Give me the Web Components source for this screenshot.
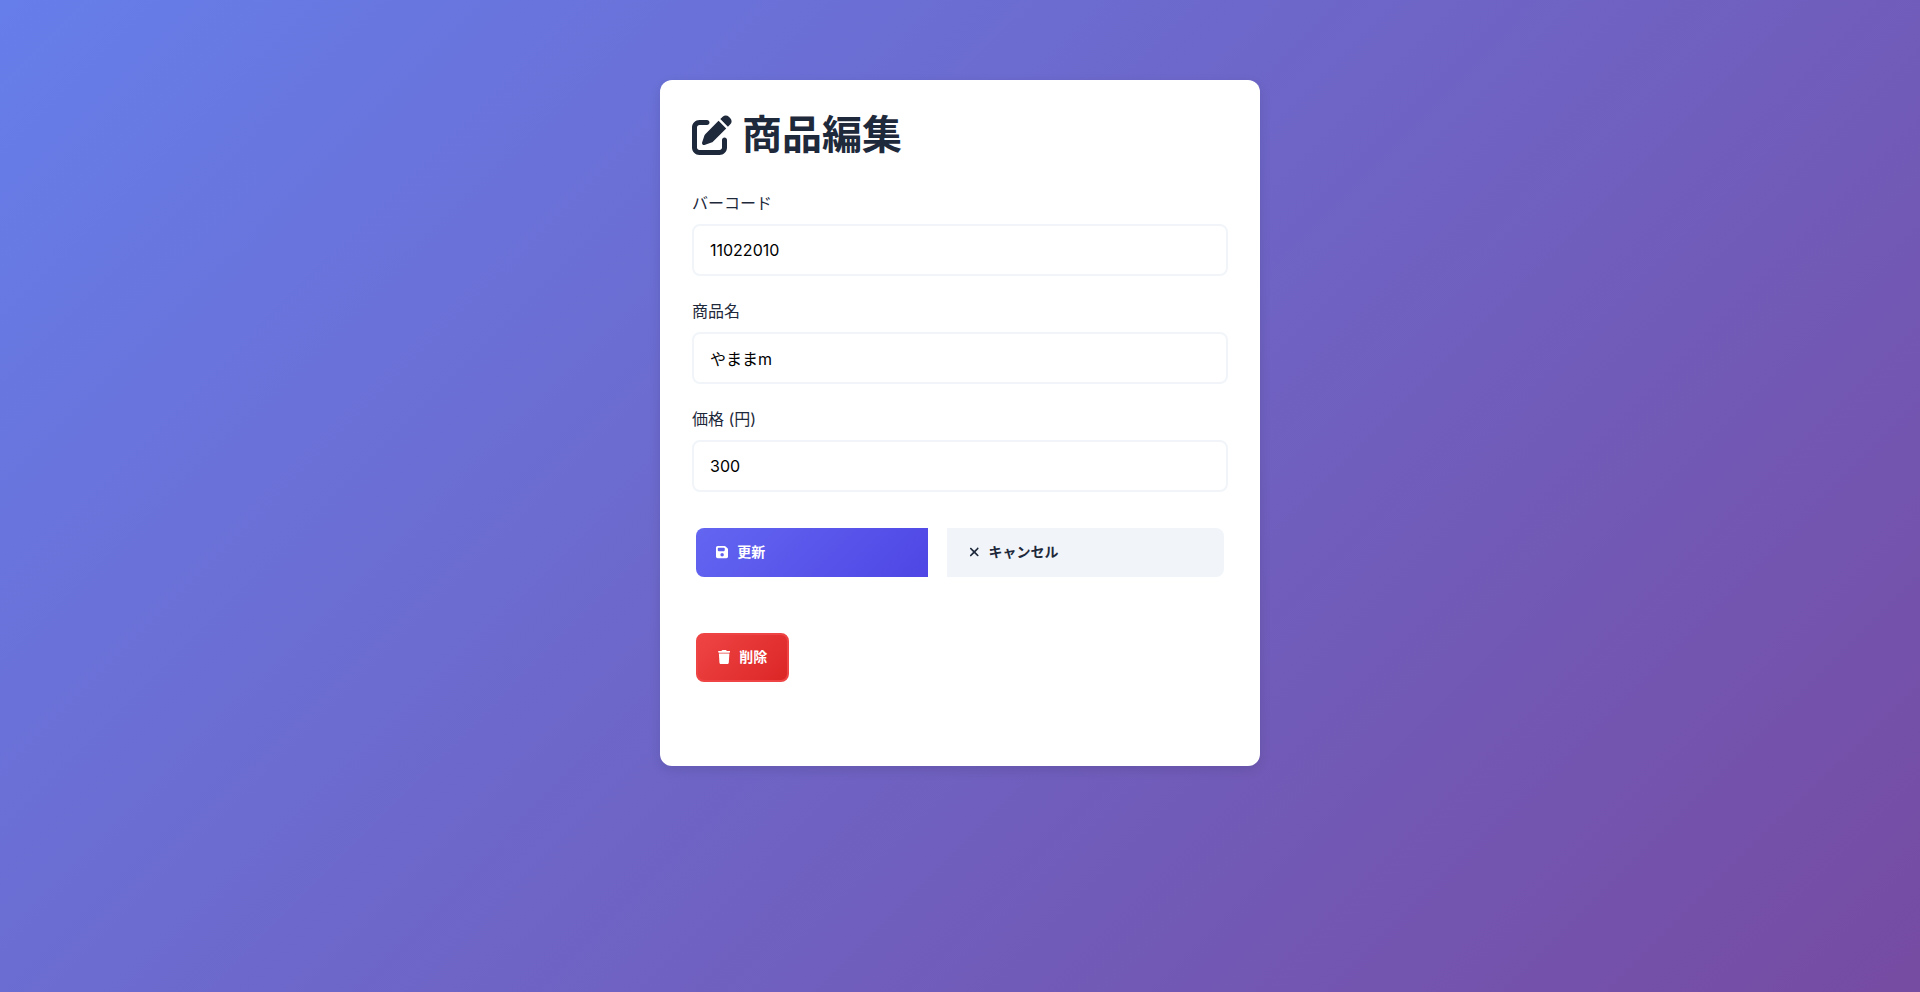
<!DOCTYPE html>
<html lang="ja">
<head>
<meta charset="utf-8">
<meta name="viewport" content="width=device-width, initial-scale=1">
<title>商品編集</title>
<style>
body { margin: 0; min-height: 100vh; background: linear-gradient(135deg, #667eea 0%, #764ba2 100%) no-repeat; font-family: Inter, "Noto Sans CJK JP", sans-serif; font-size: 16px; line-height: 24px; color: #1e293b; }
</style>
</head>
<body>
<product-card>
  <page-title slot="title">商品編集</page-title>
  <text-field label="バーコード" value="11022010"></text-field>
  <text-field label="商品名" value="やままm"></text-field>
  <text-field label="価格 (円)" value="300" mode="numeric"></text-field>
  <button-row slot="actions">
    <action-button kind="primary" icon="save">更新</action-button>
    <action-button kind="secondary" icon="close">キャンセル</action-button>
  </button-row>
  <action-button slot="danger" kind="danger" icon="trash">削除</action-button>
</product-card>
<script>
const icons = {
  edit: '<svg viewBox="0 0 512 512"><path d="M471.6 21.7c-21.9-21.9-57.3-21.9-79.2 0L362.3 51.7l97.9 97.9 30.1-30.1c21.9-21.9 21.9-57.3 0-79.2L471.6 21.7zm-299.2 220c-6.1 6.1-10.8 13.6-13.5 21.9l-29.6 88.8c-2.9 8.6-.6 18.1 5.8 24.6s15.9 8.7 24.6 5.8l88.8-29.6c8.2-2.7 15.7-7.4 21.9-13.5L437.7 172.3 339.7 74.3 172.4 241.7zM96 64C43 64 0 107 0 160V416c0 53 43 96 96 96H352c53 0 96-43 96-96V320c0-17.7-14.3-32-32-32s-32 14.3-32 32v96c0 17.7-14.3 32-32 32H96c-17.7 0-32-14.3-32-32V160c0-17.7 14.3-32 32-32h96c17.7 0 32-14.3 32-32s-14.3-32-32-32H96z"/></svg>',
  save: '<svg viewBox="0 0 448 512"><path d="M64 32C28.700 32 0 60.700 0 96V416c0 35.300 28.700 64 64 64H384c35.300 0 64-28.700 64-64V173.300c0-17-6.700-33.300-18.700-45.300L352 50.700C340 38.700 323.700 32 306.700 32H64zm0 96c0-17.700 14.300-32 32-32H288c17.700 0 32 14.300 32 32v64c0 17.700-14.300 32-32 32H96c-17.700 0-32-14.300-32-32V128zM224 288a64 64 0 1 1 0 128 64 64 0 1 1 0-128z"/></svg>',
  close: '<svg viewBox="0 0 384 512"><path d="M342.6 150.600c12.500-12.500 12.500-32.800 0-45.300s-32.800-12.500-45.300 0L192 210.700 86.600 105.400c-12.500-12.500-32.800-12.500-45.300 0s-12.500 32.800 0 45.300L146.700 256 41.400 361.400c-12.500 12.500-12.500 32.800 0 45.300s32.800 12.500 45.300 0L192 301.300 297.400 406.600c12.500 12.500 32.800 12.500 45.300 0s12.500-32.800 0-45.300L237.300 256 342.600 150.600z"/></svg>',
  trash: '<svg viewBox="0 0 448 512"><path d="M135.200 17.700L128 32H32C14.300 32 0 46.300 0 64S14.300 96 32 96H416c17.700 0 32-14.300 32-32s-14.300-32-32-32H320l-7.200-14.300C307.400 6.800 296.300 0 284.200 0H163.800c-12.100 0-23.200 6.800-28.600 17.700zM416 128H32L53.200 467c1.600 25.300 22.600 45 47.900 45H346.900c25.300 0 46.300-19.700 47.900-45L416 128z"/></svg>'
};

class ProductCard extends HTMLElement {
  constructor() {
    super();
    this.attachShadow({ mode: 'open' }).innerHTML = `
      <style>
        :host { display: block; padding: 80px 16px; }
        main { box-sizing: border-box; max-width: 600px; margin: 0 auto; padding: 32px 32px 80px; border-radius: 12px; background: #fff; box-shadow: 0 4px 12px rgb(0 0 0 / 10%); }
        form { display: flex; flex-direction: column; gap: 24px; margin-top: 34px; }
        .actions { margin-top: 8px; }
        .danger { display: flex; padding: 4px; margin-top: 48px; }
      </style>
      <main>
        <slot name="title"></slot>
        <form><slot></slot><div class="actions"><slot name="actions"></slot></div></form>
        <div class="danger"><slot name="danger"></slot></div>
      </main>`;
  }
}

class PageTitle extends HTMLElement {
  constructor() {
    super();
    this.attachShadow({ mode: 'open' }).innerHTML = `
      <style>
        :host { display: block; }
        h1 { display: flex; align-items: center; gap: 10px; margin: 0; font-size: 40px; line-height: 46px; font-weight: 700; }
        svg { display: block; width: 40px; height: 40px; fill: currentColor; }
      </style>
      <h1>${icons.edit}<span><slot></slot></span></h1>`;
  }
}

class TextField extends HTMLElement {
  connectedCallback() {
    this.attachShadow({ mode: 'open' }).innerHTML = `
      <style>
        :host { display: block; }
        label { display: block; margin-bottom: 10px; line-height: 22px; }
        input { display: block; box-sizing: border-box; width: 100%; height: 52px; padding: 0 16px; border: 2px solid #f1f5f9; border-radius: 8px; background: #fff; color: #000; font: inherit; outline: none; }
        input:focus { border-color: #6366f1; }
      </style>
      <label for="field"></label><input id="field" type="text">`;
    this.shadowRoot.querySelector('label').textContent = this.getAttribute('label');
    const input = this.shadowRoot.querySelector('input');
    input.value = this.getAttribute('value');
    input.inputMode = this.getAttribute('mode') || 'text';
  }
}

class ButtonRow extends HTMLElement {
  constructor() {
    super();
    this.attachShadow({ mode: 'open' }).innerHTML = `
      <style>
        :host { display: grid; grid-template-columns: 232fr 277fr; gap: 19px; padding: 4px; }
      </style>
      <slot></slot>`;
  }
}

class ActionButton extends HTMLElement {
  connectedCallback() {
    this.attachShadow({ mode: 'open' }).innerHTML = `
      <style>
        :host { display: block; }
        button { display: flex; align-items: center; gap: 9px; box-sizing: border-box; width: 100%; height: 49px; margin: 0; padding: 0 20px 1px; border: 0; border-radius: 8px; font: inherit; font-size: 14px; line-height: 20px; font-weight: 600; color: #fff; cursor: pointer; }
        svg { display: block; height: 14px; fill: currentColor; }
        .primary { border-radius: 8px 0 0 8px; background: linear-gradient(135deg, #6366f1, #4f46e5); }
        .secondary { border-radius: 0 8px 8px 0; padding: 0 22px 1px; background: #f1f5f9; color: #1e293b; }
        .danger { border: 2px solid #ef4444; background: linear-gradient(135deg, #ef4444, #dc2626); }
      </style>
      <button type="button" class="${this.getAttribute('kind')}">${icons[this.getAttribute('icon')]}<span><slot></slot></span></button>`;
  }
}

customElements.define('product-card', ProductCard);
customElements.define('page-title', PageTitle);
customElements.define('text-field', TextField);
customElements.define('button-row', ButtonRow);
customElements.define('action-button', ActionButton);
</script>
</body>
</html>
